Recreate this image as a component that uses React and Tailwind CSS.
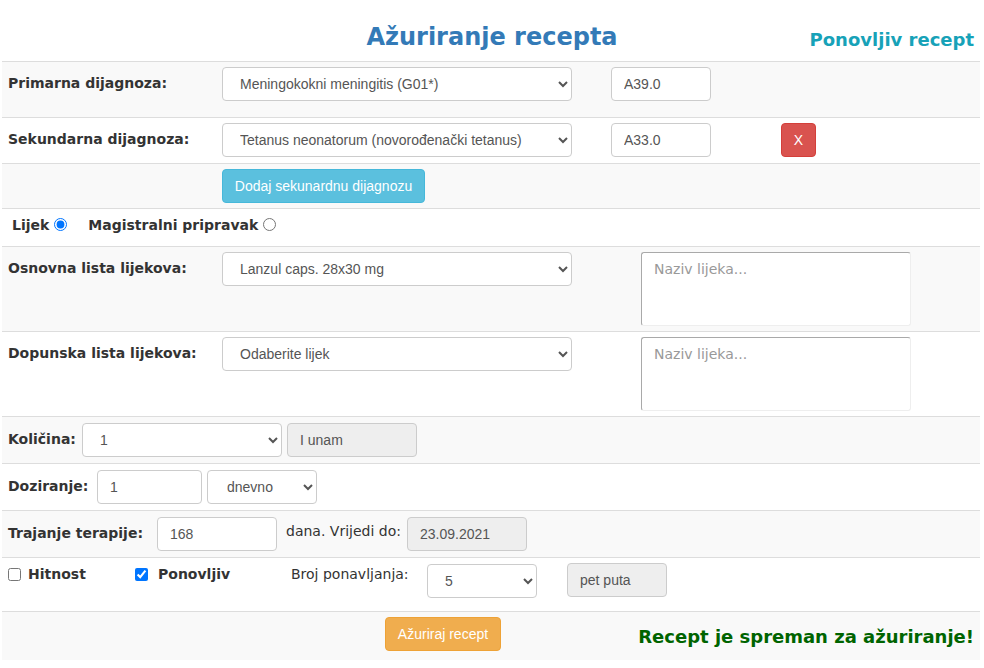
import React from 'react';

const verdana = { fontFamily: '"DejaVu Sans", Verdana, sans-serif' };

const selectCls =
  "h-[34px] border border-[#ccc] rounded-[4px] bg-white pl-[13px] pr-[6px] text-[14px] text-[#555] [font-family:'Liberation_Sans',Arial,sans-serif]";
const inputCls =
  "h-[34px] border border-[#ccc] rounded-[4px] bg-white px-[12px] text-[14px] text-[#555] [font-family:'Liberation_Sans',Arial,sans-serif]";
const disabledCls =
  "h-[34px] border border-[#ccc] rounded-[4px] bg-[#eee] px-[12px] text-[14px] text-[#555] [font-family:'Liberation_Sans',Arial,sans-serif]";
const btnCls =
  "h-[34px] rounded-[4px] px-0 whitespace-nowrap text-[14px] text-white [font-family:'Liberation_Sans',Arial,sans-serif]";

function Label({ children, w }) {
  return (
    <div className={`${w} shrink-0 pl-[6px] mt-[8px] leading-[17px] text-[14px] font-bold text-[#333]`}>
      {children}
    </div>
  );
}

export default function App() {
  return (
    <div className="w-[984px] h-[668px] bg-white text-[#333]" style={verdana}>
      {/* header */}
      <div className="grid grid-cols-[1fr_auto_1fr] items-end h-[61px] pb-[9px] px-[10px]">
        <div />
        <h1 className="text-[24px] font-bold text-[#337ab7] leading-[30px]">Ažuriranje recepta</h1>
        <div className="text-right text-[18px] font-bold text-[#17a2b8] leading-[24px]">Ponovljiv recept</div>
      </div>

      <div className="mx-[2px] w-[978px]">
        {/* primarna */}
        <div className="flex items-start h-[56px] pt-[5px] border-t border-[#ddd] bg-[#f9f9f9]">
          <Label w="w-[220px]">Primarna dijagnoza:</Label>
          <select className={`${selectCls} w-[350px]`} defaultValue="a">
            <option value="a">Meningokokni meningitis (G01*)</option>
          </select>
          <input className={`${inputCls} w-[100px] ml-[39px]`} defaultValue="A39.0" />
        </div>

        {/* sekundarna */}
        <div className="flex items-start h-[46px] pt-[5px] border-t border-[#ddd] bg-white">
          <Label w="w-[220px]">Sekundarna dijagnoza:</Label>
          <select className={`${selectCls} w-[350px]`} defaultValue="a">
            <option value="a">Tetanus neonatorum (novorođenački tetanus)</option>
          </select>
          <input className={`${inputCls} w-[100px] ml-[39px]`} defaultValue="A33.0" />
          <button className={`${btnCls} w-[35px] h-[33px] ml-[70px] bg-[#d9534f] border border-[#d43f3a]`}>X</button>
        </div>

        {/* dodaj */}
        <div className="flex items-start h-[45px] pt-[5px] border-t border-[#ddd] bg-[#f9f9f9]">
          <div className="w-[220px] shrink-0" />
          <button className={`${btnCls} h-[34px] w-[203px] bg-[#5bc0de] border border-[#46b8da]`}>Dodaj sekunardnu dijagnozu</button>
        </div>

        {/* radio */}
        <div className="flex items-center h-[38px] pb-[4px] border-t border-[#ddd] bg-white text-[14px] font-bold">
          <label className="flex items-center ml-[10px]">
            Lijek
            <input type="radio" name="vrsta" defaultChecked className="ml-[5px] w-[13px] h-[13px] mb-[3px]" />
          </label>
          <label className="flex items-center ml-[21px]">
            Magistralni pripravak
            <input type="radio" name="vrsta" className="ml-[5px] w-[13px] h-[13px] mb-[3px]" />
          </label>
        </div>

        {/* osnovna */}
        <div className="flex items-start h-[85px] pt-[5px] border-t border-[#ddd] bg-[#f9f9f9]">
          <Label w="w-[220px]">Osnovna lista lijekova:</Label>
          <select className={`${selectCls} w-[350px]`} defaultValue="a">
            <option value="a">Lanzul caps. 28x30 mg</option>
          </select>
          <textarea
            placeholder="Naziv lijeka..."
            className="ml-[69px] w-[270px] h-[74px] border border-[#a9a9a9] border-b-[#eee] border-r-[#eee] rounded-[3px] bg-white px-[12px] py-[6px] text-[14px] placeholder:text-[#999] resize-none"
          />
        </div>

        {/* dopunska */}
        <div className="flex items-start h-[85px] pt-[5px] border-t border-[#ddd] bg-white">
          <Label w="w-[220px]">Dopunska lista lijekova:</Label>
          <select className={`${selectCls} w-[350px]`} defaultValue="a">
            <option value="a">Odaberite lijek</option>
          </select>
          <textarea
            placeholder="Naziv lijeka..."
            className="ml-[69px] w-[270px] h-[74px] border border-[#a9a9a9] border-b-[#eee] border-r-[#eee] rounded-[3px] bg-white px-[12px] py-[6px] text-[14px] placeholder:text-[#999] resize-none"
          />
        </div>

        {/* kolicina */}
        <div className="flex items-start h-[47px] pt-[6px] border-t border-[#ddd] bg-[#f9f9f9]">
          <Label w="w-[80px]">Količina:</Label>
          <select className={`${selectCls} w-[200px]`} defaultValue="1">
            <option value="1">1</option>
          </select>
          <input disabled className={`${disabledCls} w-[130px] ml-[5px]`} defaultValue="I unam" />
        </div>

        {/* doziranje */}
        <div className="flex items-start h-[47px] pt-[6px] border-t border-[#ddd] bg-white">
          <Label w="w-[95px]">Doziranje:</Label>
          <input className={`${inputCls} w-[105px]`} defaultValue="1" />
          <select className={`${selectCls} w-[110px] ml-[5px] pl-[15px]`} defaultValue="d">
            <option value="d">dnevno</option>
          </select>
        </div>

        {/* trajanje */}
        <div className="flex items-start h-[47px] pt-[6px] border-t border-[#ddd] bg-[#f9f9f9]">
          <Label w="w-[155px]">Trajanje terapije:</Label>
          <input className={`${inputCls} w-[120px]`} defaultValue="168" />
          <div className="ml-[9px] mt-[6px] text-[14px] leading-[17px] w-[121px]">dana. Vrijedi do:</div>
          <input disabled className={`${disabledCls} w-[120px]`} defaultValue="23.09.2021" />
        </div>

        {/* hitnost / ponovljiv */}
        <div className="flex items-start h-[54px] pt-[5px] border-t border-[#ddd] bg-white text-[14px]">
          <label className="flex items-center mt-[3px] ml-[6px] font-bold leading-[17px] w-[127px]">
            <input type="checkbox" className="w-[13px] h-[13px] mr-[7px]" />
            Hitnost
          </label>
          <label className="flex items-center mt-[3px] font-bold leading-[17px] w-[156px]">
            <input type="checkbox" defaultChecked className="w-[13px] h-[13px] mr-[10px]" />
            Ponovljiv
          </label>
          <div className="mt-[3px] leading-[17px] w-[136px]">Broj ponavljanja:</div>
          <select className={`${selectCls} w-[110px] mt-[1px]`} defaultValue="5">
            <option value="5">5</option>
          </select>
          <input disabled className={`${disabledCls} w-[100px] ml-[30px]`} defaultValue="pet puta" />
        </div>

        {/* footer */}
        <div className="flex items-start h-[49px] pt-[5px] border-t border-[#ddd] bg-[#f9f9f9]">
          <button className={`${btnCls} ml-[383px] w-[116px] bg-[#f0ad4e] border border-[#eea236]`}>Ažuriraj recept</button>
          <div className="ml-auto mr-[6px] mt-[10px] text-[18px] font-bold text-[#006400] leading-[20px]">
            Recept je spreman za ažuriranje!
          </div>
        </div>
      </div>
    </div>
  );
}
